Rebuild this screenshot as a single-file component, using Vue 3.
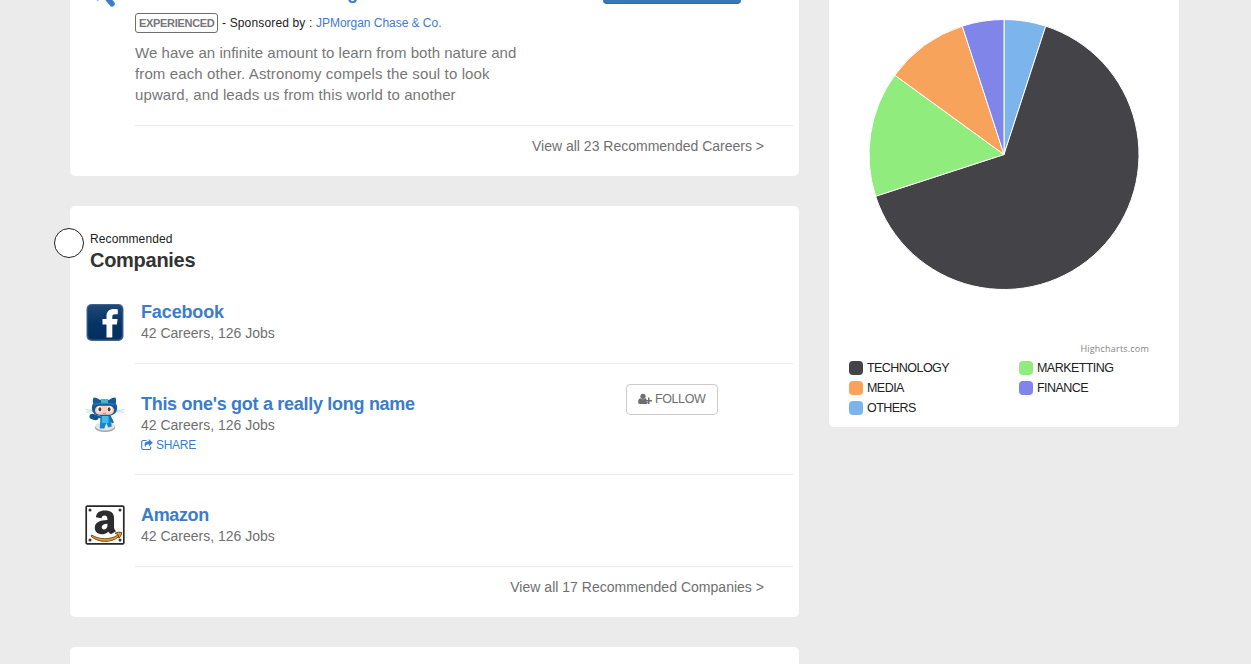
<script setup>
const companies = [
  { name: 'Facebook', logo: 'facebook', nameClass: 'n-facebook', follow: false },
  { name: "This one's got a really long name", logo: 'octocat', nameClass: 'n-long', follow: true },
  { name: 'Amazon', logo: 'amazon', nameClass: 'n-amazon', follow: false },
]

const legend = [
  { label: 'TECHNOLOGY', color: '#434348' },
  { label: 'MARKETTING', color: '#90ed7d' },
  { label: 'MEDIA', color: '#f7a35c' },
  { label: 'FINANCE', color: '#8085e9' },
  { label: 'OTHERS', color: '#7cb5ec' },
]

const shares = [
  { value: 5, color: '#7cb5ec' },
  { value: 65, color: '#434348' },
  { value: 15, color: '#90ed7d' },
  { value: 10, color: '#f7a35c' },
  { value: 5, color: '#8085e9' },
]

const cx = 175
const cy = 154.5
const radius = 135
const point = (pct) => {
  const a = (pct / 100) * Math.PI * 2 - Math.PI / 2
  return `${(cx + radius * Math.cos(a)).toFixed(2)} ${(cy + radius * Math.sin(a)).toFixed(2)}`
}
let start = 0
const slices = shares.map(({ value, color }) => {
  const end = start + value
  const d = `M${cx} ${cy}L${point(start)}A${radius} ${radius} 0 ${value > 50 ? 1 : 0} 1 ${point(end)}Z`
  start = end
  return { d, color }
})
</script>

<template>
  <div class="page">
    <main class="column">
      <section class="card careers">
        <div class="career-top">
          <svg class="career-icon" width="44" height="14" viewBox="0 0 44 14">
            <path d="M20 -6L28 3.800" stroke="#3b7ccb" stroke-width="5.500" stroke-linecap="round" />
            <path d="M12 -3L14 1" stroke="#8ab5e3" stroke-width="1.500" />
          </svg>
          <div class="career-title">g</div>
          <div class="career-button"></div>
        </div>
        <div class="career-body">
          <div class="sponsor">
            <span class="level">EXPERIENCED</span>
            <span class="by">- Sponsored by :</span>
            <a class="sponsor-name">JPMorgan Chase &amp; Co.</a>
          </div>
          <p class="about">
            <span class="l1">We have an infinite amount to learn from both nature and</span><br />
            <span class="l2">from each other. Astronomy compels the soul to look</span><br />
            <span class="l3">upward, and leads us from this world to another</span>
          </p>
        </div>
        <div class="view-all">View all 23 Recommended Careers &gt;</div>
      </section>

      <section class="card companies">
        <span class="marker"></span>
        <header class="heading">
          <small>Recommended</small>
          <h2>Companies</h2>
        </header>
        <article v-for="c in companies" :key="c.name" class="company" :class="{ tall: c.follow }">
          <svg v-if="c.logo === 'facebook'" class="logo" width="40" height="40" viewBox="0 0 40 40">
            <defs>
              <linearGradient id="fb" x1="0" y1="0" x2="0" y2="1">
                <stop offset="0" stop-color="#1d4877" />
                <stop offset=".55" stop-color="#063365" />
                <stop offset="1" stop-color="#01305f" />
              </linearGradient>
            </defs>
            <rect x="1.500" y="2" width="37" height="37" rx="5" fill="#456990" />
            <rect x="2.900" y="3.400" width="34.200" height="34.200" rx="4" fill="url(#fb)" stroke="#1e4876" stroke-width=".8" />
            <path d="M21.500 35.500V22.500h-4v-5.400h4v-2.800c0-5 2.800-7.300 7.300-7.300 1.900 0 3 .1 4 .4v4.800h-2.800c-2.200 0-2.700.9-2.700 2.600v2.300h5.300l-.7 5.400h-4.600v13z" fill="#fff" />
          </svg>
          <svg v-else-if="c.logo === 'octocat'" class="logo" width="40" height="40" viewBox="0 0 40 40">
            <ellipse cx="20" cy="33.500" rx="10.200" ry="4.500" fill="#a3a7aa" />
            <ellipse cx="20" cy="32.300" rx="9.800" ry="4.200" fill="#e1e4e6" />
            <path d="M.5 15.500l10 1.700M1 18.200l10-.7M39.500 15.500l-10 1.700M39 18.200l-10-.7" stroke="#b9deef" stroke-width="1" />
            <path d="M15.500 20h9.500l1.800 12.500-3.500 1-2-4.500-2 5.500h-4.500z" fill="#1487cf" />
            <path d="M17 22h6.500v7H17z" fill="#45b9e7" />
            <path d="M16 23.500l-4-1" stroke="#1b609d" stroke-width="2" />
            <ellipse cx="9" cy="23" rx="4.700" ry="2.900" transform="rotate(15 9 23)" fill="#10548f" />
            <path d="M25 23l2.500 5" stroke="#176eae" stroke-width="2.500" stroke-linecap="round" />
            <g transform="translate(-.5 .6) scale(1 .86)">
              <path d="M9 3.500c3 0 5 1.300 6 2.500h10c1-1.200 3-2.500 6-2.500 1 3 .6 5 .2 6.500 1.600 2.500 1.800 5.500 1 8.500-1.100 4.700-5 6.500-12.200 6.500S8.900 23.200 7.800 18.500c-.8-3-.5-6 1-8.500C8.300 8.500 8 6.500 9 3.500z" fill="#165b99" />
              <path d="M16.500 5h7v6h-7z" fill="#45bbc9" />
              <path d="M10 11.500q10-3 20 0" stroke="#278bb6" stroke-width="1.300" fill="none" />
              <rect x="10.500" y="13" width="19" height="10.500" rx="5" fill="#f5cfb9" />
              <ellipse cx="15" cy="17" rx="2.700" ry="3.400" fill="#fff" />
              <ellipse cx="25" cy="17" rx="2.700" ry="3.400" fill="#fff" />
              <ellipse cx="15.400" cy="17.200" rx="1.500" ry="2.400" fill="#5b3937" />
              <ellipse cx="24.600" cy="17.200" rx="1.500" ry="2.400" fill="#5b3937" />
              <path d="M18.500 21.500q1.500 1 3 0" stroke="#a75b50" stroke-width=".7" fill="none" />
            </g>
          </svg>
          <svg v-else class="logo" width="40" height="40" viewBox="0 0 40 40">
            <rect x="1.200" y="1.200" width="37.600" height="37.600" rx="1" fill="#fff" stroke="#292929" stroke-width="1.700" />
            <g fill="#333"><circle cx="5" cy="5" r="1.500" /><circle cx="35" cy="5" r="1.500" /><circle cx="5" cy="35" r="1.500" /><circle cx="35" cy="35" r="1.500" /></g>
            <path transform="translate(-2.300 0) scale(1.100 .98)" d="M12 12.500C12.500 7.500 15.500 5.500 20 5.500c5.500 0 8.500 2.500 8.500 7.500v9.500c0 2 .6 2.800 1.800 4.200l-4.600 3.200c-1.100-.8-1.800-1.800-2.400-2.700-5.300 5-12.300 2.500-12.300-3.700 0-6 4.500-7.900 11.500-8.200 0-3-.7-4.500-2.700-4.500-1.700 0-2.400 1-2.700 2.700zm10.500 6.700c-3.400.1-5.200 1.300-5.200 3.600 0 3.500 5.200 2.800 5.200-2z" fill="#2c2c2e" />
            <path d="M6.500 30c8 4.800 18 5 26 .3l1.200 1.500c-8 6.500-20.500 6-27.700-.6z" fill="#f19a21" stroke="#4a371d" stroke-width=".8" />
            <path d="M30 28.300q3-2 6.800-.8-.2 3.200-2.900 5.700l-.8-3.600z" fill="#f19a21" stroke="#4a371d" stroke-width=".8" />
          </svg>
          <div class="details">
            <div class="info">
              <h3><span :class="c.nameClass">{{ c.name }}</span></h3>
              <p class="counts">42 Careers, 126 Jobs</p>
              <a v-if="c.follow" class="share">
                <svg width="12" height="12" viewBox="0 0 12 12" fill="none">
                  <path d="M5.500 1.500H2.200Q.7 1.500.7 3v6q0 1.500 1.500 1.500h6Q9.700 10.500 9.700 9V7.500" stroke="#3b7ccb" stroke-width="1.100" />
                  <path d="M7.800 0L11.800 3.700 7.800 7.400V5.300C5.500 5.200 4.500 6 4.600 8.500 2.400 5.200 4 2.300 7.800 2.300z" fill="#3b7ccb" />
                </svg>
                <span>SHARE</span>
              </a>
            </div>
            <button v-if="c.follow" class="follow">
              <svg width="14" height="12" viewBox="0 0 14 12" fill="#6e6e6e">
                <circle cx="5" cy="3.300" r="2.600" />
                <path d="M2.400 5.300C.8 5.700.2 7 .2 9.300c0 1.100.6 1.700 1.600 1.700h6.500c.8 0 1.200-.3 1.400-.9V8.500H8V6.800h.9C8.600 6 8.200 5.500 7.500 5.300 6 6.600 4 6.600 2.400 5.300z" />
                <path d="M10 4.500h1.500V7H14v1.500h-2.500V11H10V8.500H8V7h2z" />
              </svg>
              <span>FOLLOW</span>
            </button>
          </div>
        </article>
        <div class="view-all wide">View all 17 Recommended Companies &gt;</div>
      </section>

      <section class="card next"></section>
    </main>

    <aside class="card chart">
      <svg class="pie" width="350" height="341" viewBox="0 0 350 341">
        <path v-for="s in slices" :key="s.d" :d="s.d" :fill="s.color" stroke="#fff" stroke-width="1" stroke-linejoin="round" />
      </svg>
      <div class="credit"><span>Highcharts.com</span></div>
      <ul class="legend">
        <li v-for="l in legend" :key="l.label">
          <i :style="{ background: l.color }"></i><span>{{ l.label }}</span>
        </li>
      </ul>
    </aside>
  </div>
</template>

<style>
body {
  background: #ebebeb;
  overflow: hidden;
}
</style>

<style scoped>
* {
  box-sizing: border-box;
}
.page {
  display: grid;
  grid-template-columns: 729px 350px;
  column-gap: 30px;
  align-items: start;
  width: 1251px;
  height: 664px;
  padding-left: 70px;
  overflow: hidden;
  background: #ebebeb;
  color: #222;
  font-family: "Liberation Sans", Arial, sans-serif;
  font-size: 12px;
}
h2, h3, p, ul {
  margin: 0;
  padding: 0;
}
.column {
  display: flex;
  flex-direction: column;
  gap: 30px;
}
.card {
  background: #fff;
  border-radius: 5px;
}
.careers {
  height: 176px;
  border-radius: 0 0 5px 5px;
}
.career-top {
  display: flex;
  height: 13px;
  padding-left: 14px;
}
.career-icon {
  flex: none;
  width: 44px;
}
.career-title {
  width: 256px;
  margin-left: 219px;
  margin-top: -18px;
  color: #3b7ccb;
  font-size: 18px;
  font-weight: bold;
  line-height: 22px;
}
.career-button {
  width: 138px;
  height: 4px;
  background: #337ab7;
  border-bottom: 1px solid #2e6da4;
  border-radius: 0 0 4px 4px;
}
.career-body {
  height: 113px;
  margin-left: 65px;
  margin-right: 6px;
  border-bottom: 1px solid #ebebeb;
}
.sponsor {
  display: flex;
  align-items: center;
  height: 20px;
  white-space: nowrap;
}
.level {
  width: 83px;
  height: 20px;
  padding-left: 3px;
  border: 1px solid #6e6e6e;
  border-radius: 3px;
  color: #777;
  font-size: 11px;
  font-weight: bold;
  letter-spacing: -0.31px;
  line-height: 18px;
}
.by {
  width: 94px;
  margin-left: 4px;
  letter-spacing: 0.15px;
}
.sponsor-name {
  color: #3b7ccb;
  letter-spacing: -0.03px;
}
.about {
  margin-top: 9px;
  color: #777;
  font-size: 15px;
  line-height: 21px;
  white-space: nowrap;
}
.l1 {
  letter-spacing: 0.04px;
}
.l2 {
  letter-spacing: 0.12px;
}
.l3 {
  letter-spacing: 0.1px;
}
.view-all {
  padding-right: 35px;
  color: #707070;
  font-size: 14px;
  line-height: 40px;
  text-align: right;
  white-space: nowrap;
}
.view-all.wide {
  letter-spacing: 0.02px;
}
.companies {
  position: relative;
  height: 411px;
}
.marker {
  position: absolute;
  left: -16px;
  top: 22px;
  width: 30px;
  height: 30px;
  border: 1px solid #222;
  border-radius: 50%;
  background: #fff;
}
.heading {
  height: 66px;
  padding: 25px 0 0 20px;
}
.heading small {
  display: block;
  font-size: 12px;
  letter-spacing: 0.1px;
  line-height: 16px;
}
.heading h2 {
  color: #333;
  font-size: 20px;
  letter-spacing: -0.28px;
  line-height: 26px;
}
.company {
  display: flex;
  height: 92px;
  padding: 0 6px 0 15px;
}
.company.tall {
  height: 111px;
}
.company .logo {
  flex: none;
  margin-top: 30px;
}
.details {
  display: flex;
  flex: 1;
  justify-content: space-between;
  margin-left: 10px;
  padding: 29px 75px 0 6px;
  border-bottom: 1px solid #ebebeb;
}
.info h3 {
  color: #3b7ccb;
  font-size: 18px;
  line-height: 22px;
  white-space: nowrap;
}
.n-facebook {
  letter-spacing: -0.13px;
}
.n-long {
  letter-spacing: -0.29px;
}
.n-amazon {
  letter-spacing: -0.35px;
}
.counts {
  color: #707070;
  font-size: 14px;
  line-height: 20px;
  white-space: nowrap;
}
.share {
  display: flex;
  gap: 3px;
  align-items: center;
  height: 20px;
  color: #3b7ccb;
  letter-spacing: -0.3px;
}
.follow {
  display: flex;
  gap: 3px;
  align-items: center;
  width: 92px;
  height: 31px;
  margin-top: -9px;
  padding: 0 0 2px 11px;
  border: 1px solid #ccc;
  border-radius: 4px;
  background: #fff;
  color: #6e6e6e;
  font: 12.5px "Liberation Sans", Arial, sans-serif;
  letter-spacing: -0.4px;
}
.chart {
  height: 427px;
  border-radius: 0 0 5px 5px;
}
.pie {
  display: block;
}
.credit {
  height: 17px;
  padding-right: 30px;
  color: #858585;
  font: 9px/16px "Open Sans", sans-serif;
  letter-spacing: 0.2px;
  text-align: right;
}
.legend {
  display: grid;
  grid-template-columns: 170px 150px;
  padding-left: 20px;
  list-style: none;
}
.legend li {
  display: flex;
  align-items: center;
  height: 20px;
}
.legend i {
  width: 14px;
  height: 14px;
  margin-right: 4px;
  border-radius: 4px;
}
.legend span {
  padding-bottom: 1px;
  font-size: 12.5px;
  letter-spacing: -0.55px;
}
.next {
  height: 47px;
}
</style>
